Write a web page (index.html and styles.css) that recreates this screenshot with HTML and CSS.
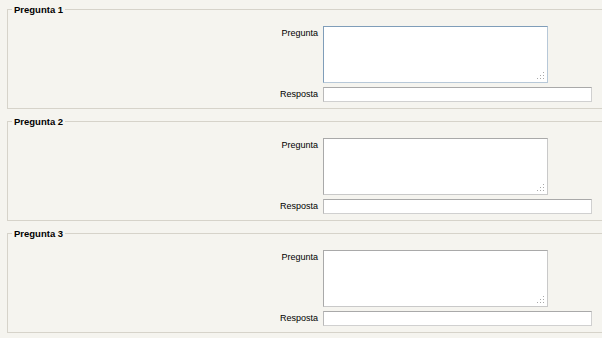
FILE: index.html
```html
<!DOCTYPE html>
<html>
<head>
  <title>Preguntes</title>
  <link rel="stylesheet" href="styles.css">
</head>
<body>
  <fieldset class="question">
    <legend>Pregunta 1</legend>
    <div class="row">
      <label for="q1">Pregunta</label>
      <div class="area-wrap">
        <textarea id="q1" class="focused"></textarea>
        <svg class="grip" width="8" height="8" viewBox="0 0 8 8">
          <rect x="6" y="0" width="1" height="1"/>
          <rect x="3" y="3" width="1" height="1"/><rect x="6" y="3" width="1" height="1"/>
          <rect x="0" y="6" width="1" height="1"/><rect x="3" y="6" width="1" height="1"/><rect x="6" y="6" width="1" height="1"/>
        </svg>
      </div>
    </div>
    <div class="row row-answer">
      <label for="a1">Resposta</label>
      <input type="text" id="a1">
    </div>
  </fieldset>

  <fieldset class="question">
    <legend>Pregunta 2</legend>
    <div class="row">
      <label for="q2">Pregunta</label>
      <div class="area-wrap">
        <textarea id="q2"></textarea>
        <svg class="grip" width="8" height="8" viewBox="0 0 8 8">
          <rect x="6" y="0" width="1" height="1"/>
          <rect x="3" y="3" width="1" height="1"/><rect x="6" y="3" width="1" height="1"/>
          <rect x="0" y="6" width="1" height="1"/><rect x="3" y="6" width="1" height="1"/><rect x="6" y="6" width="1" height="1"/>
        </svg>
      </div>
    </div>
    <div class="row row-answer">
      <label for="a2">Resposta</label>
      <input type="text" id="a2">
    </div>
  </fieldset>

  <fieldset class="question">
    <legend>Pregunta 3</legend>
    <div class="row">
      <label for="q3">Pregunta</label>
      <div class="area-wrap">
        <textarea id="q3"></textarea>
        <svg class="grip" width="8" height="8" viewBox="0 0 8 8">
          <rect x="6" y="0" width="1" height="1"/>
          <rect x="3" y="3" width="1" height="1"/><rect x="6" y="3" width="1" height="1"/>
          <rect x="0" y="6" width="1" height="1"/><rect x="3" y="6" width="1" height="1"/><rect x="6" y="6" width="1" height="1"/>
        </svg>
      </div>
    </div>
    <div class="row row-answer">
      <label for="a3">Resposta</label>
      <input type="text" id="a3">
    </div>
  </fieldset>
</body>
</html>
```

FILE: styles.css
```css
html, body {
  background-color: #f5f4ef;
}
body {
  margin: 0;
  padding-top: 4px;
  font-family: "Liberation Sans", Arial, sans-serif;
  font-size: 9px;
  color: #000;
  overflow: hidden;
}
.question {
  margin: 0 -20px 7px 7px;
  padding: 0 0 6px 0;
  border: 1px solid #d6d3ca;
  border-radius: 0;
}
.question legend {
  margin-left: 4px;
  padding: 0 2px;
  font-weight: bold;
  font-size: 9.5px;
  line-height: 11px;
}
.row {
  display: grid;
  grid-template-columns: 310px 1fr;
  column-gap: 5px;
  align-items: start;
}
.row:first-of-type {
  margin-top: 11px;
}
.row-answer {
  margin-top: 4px;
  align-items: center;
}
.row label {
  text-align: right;
  line-height: 11px;
}
.row:first-of-type label {
  padding-top: 2px;
}
.area-wrap {
  position: relative;
  width: 225px;
  height: 57px;
}
textarea {
  display: block;
  width: 225px;
  height: 57px;
  box-sizing: border-box;
  margin: 0;
  padding: 2px;
  border: 1px solid #c9c9c9;
  border-top-color: #a9a9a9;
  border-left-color: #a9a9a9;
  background: #fff;
  resize: none;
  font-family: "Liberation Sans", Arial, sans-serif;
  font-size: 11px;
}
textarea.focused {
  border-color: #7f9db9;
  border-bottom-color: #b7c8d8;
  border-right-color: #b7c8d8;
}
.grip {
  position: absolute;
  right: 3px;
  bottom: 3px;
  fill: #a8a8a8;
}
input[type="text"] {
  display: block;
  width: 269px;
  height: 15px;
  box-sizing: border-box;
  margin: 0;
  padding: 0 2px;
  border: 1px solid #d0d0d0;
  border-top-color: #a9a9a9;
  border-left-color: #b9b9b9;
  background: #fff;
  font-family: "Liberation Sans", Arial, sans-serif;
  font-size: 11px;
}
```
